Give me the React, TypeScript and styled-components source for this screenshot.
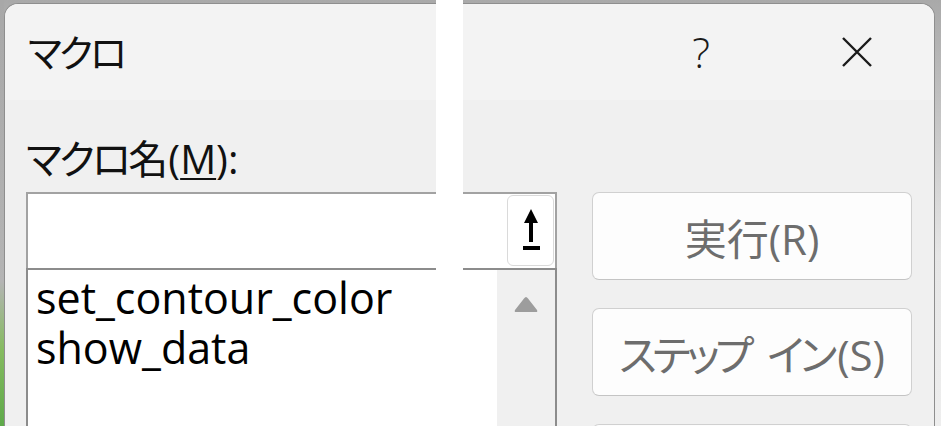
import React from "react";
import styled, { createGlobalStyle } from "styled-components";

const Global = createGlobalStyle`
  html, body { margin: 0; padding: 0; }
  body { background: #b0b0b0; overflow: hidden; }
`;

const JP = `"Open Sans", "Noto Sans CJK JP", sans-serif`;

const Frame = styled.div`
  position: relative;
  width: 941px;
  height: 426px;
  overflow: hidden;
  box-sizing: border-box;
  padding: 3px 6px 0 4px;
  background:
    linear-gradient(180deg, #a8a8a8 0%, #b4b4b4 66%, #86bb60 82%, #5ea94a 100%) left top / 4px 100% no-repeat,
    linear-gradient(180deg, #a9a9a9 0%, #bdbdbd 20%, #e6e6e6 60%, #eeeeee 100%);
  display: flex;
`;

const Seam = styled.div`
  position: absolute;
  top: 0;
  bottom: 0;
  left: 436px;
  width: 27px;
  background: #ffffff;
`;

const Dialog = styled.div`
  flex: 1;
  height: 460px;
  border: 1px solid #8e8e8e;
  border-bottom: none;
  border-radius: 14px 14px 0 0;
  background: #f0f0f0;
  overflow: hidden;
  display: flex;
  flex-direction: column;
`;

const TitleBar = styled.div`
  height: 96px;
  flex: none;
  background: #f3f3f3;
  display: flex;
  align-items: center;
  padding-left: 23px;
  font-family: ${JP};
  font-feature-settings: "palt";
`;

const Kana = styled.span<{ $tight: number }>`
  letter-spacing: ${(p) => p.$tight}em;
`;

const Title = styled.div`
  font-size: 38px;
  color: #111;
  line-height: 1;
`;

const HelpButton = styled.div`
  margin-left: auto;
  width: 60px;
  text-align: center;
  font-family: "Open Sans", sans-serif;
  font-size: 42px;
  font-weight: 300;
  color: #1a1a1a;
  line-height: 1;
`;

const CloseButton = styled.div`
  margin-left: 96px;
  margin-right: 47px;
  width: 60px;
  display: flex;
  justify-content: center;
  align-items: center;
`;

const Body = styled.div`
  display: grid;
  grid-template-columns: 531px 320px;
  column-gap: 35px;
  padding: 0 22px 0 21px;
`;

const LeftColumn = styled.div`
  display: flex;
  flex-direction: column;
`;

const Label = styled.div`
  margin-top: 36px;
  height: 46px;
  line-height: 46px;
  font-family: ${JP};
  font-feature-settings: "palt";
  font-size: 40px;
  color: #111;
  margin-bottom: 10px;
  white-space: nowrap;
  u { text-decoration-thickness: 2px; text-underline-offset: 4px; }
`;

const InputRow = styled.div`
  height: 76px;
  box-sizing: border-box;
  border: 2px solid #a2a2a2;
  border-bottom: none;
  background: #fff;
  display: flex;
  justify-content: flex-end;
  padding: 1px 1px 0 0;
`;

const RefButton = styled.div`
  width: 47px;
  height: 71px;
  box-sizing: border-box;
  border: 1px solid #dadada;
  border-radius: 6px;
  background: #fff;
  display: flex;
  align-items: center;
  justify-content: center;
`;

const ListBox = styled.div`
  height: 200px;
  box-sizing: border-box;
  border: 2px solid #8c8c8c;
  background: #fff;
  display: flex;
`;

const Items = styled.div`
  flex: 1;
  padding: 3px 0 0 8px;
`;

const Item = styled.div`
  font-family: "Open Sans", sans-serif;
  font-size: 43px;
  line-height: 50px;
  height: 50px;
  color: #000;
  white-space: nowrap;
`;

const ScrollBar = styled.div`
  width: 58px;
  background: #f0f0f0;
  display: flex;
  justify-content: center;
  padding-top: 26px;
  box-sizing: border-box;
`;

const RightColumn = styled.div`
  padding-top: 92px;
  display: flex;
  flex-direction: column;
  gap: 28px;
`;

const ActionButton = styled.div`
  height: 88px;
  flex: none;
  box-sizing: border-box;
  border: 1px solid #d0d0d0;
  border-bottom-color: #c4c4c4;
  border-radius: 7px;
  background: #fdfdfd;
  display: flex;
  align-items: center;
  justify-content: center;
  font-family: ${JP};
  font-feature-settings: "palt";
  font-size: 42px;
  color: #6d6d6d;
`;

const Caption = styled.span`
  white-space: pre;
  word-spacing: 0.15em;
`;

const UpArrowIcon = () => (
  <svg width="20" height="44" viewBox="0 0 20 44">
    <polygon points="10,0 17,14 12,14 12,33 8,33 8,14 3,14" fill="#000" />
    <rect x="2" y="37" width="17" height="4" fill="#000" />
  </svg>
);

const CloseIcon = () => (
  <svg width="32" height="32" viewBox="0 0 32 32">
    <path d="M2 2 L30 30 M30 2 L2 30" stroke="#1a1a1a" strokeWidth="2.4" fill="none" />
  </svg>
);

const ScrollUpIcon = () => (
  <svg width="24" height="17" viewBox="0 0 24 17">
    <path d="M12 1 Q13 1 14 2.5 L23 14 Q24 16 22 16 L2 16 Q0 16 1 14 L10 2.5 Q11 1 12 1 Z" fill="#9d9d9d" />
  </svg>
);

const macros = ["set_contour_color", "show_data"];

export default function App() {
  return (
    <>
      <Global />
      <Frame>
        <Dialog>
          <TitleBar>
            <Title>
              <Kana $tight={-0.08}>マクロ</Kana>
            </Title>
            <HelpButton>?</HelpButton>
            <CloseButton>
              <CloseIcon />
            </CloseButton>
          </TitleBar>
          <Body>
            <LeftColumn>
              <Label>
                <Kana $tight={-0.07}>マクロ</Kana>名(<u>M</u>):
              </Label>
              <InputRow>
                <RefButton>
                  <UpArrowIcon />
                </RefButton>
              </InputRow>
              <ListBox>
                <Items>
                  {macros.map((m) => (
                    <Item key={m}>{m}</Item>
                  ))}
                </Items>
                <ScrollBar>
                  <ScrollUpIcon />
                </ScrollBar>
              </ListBox>
            </LeftColumn>
            <RightColumn>
              <ActionButton>
                <Caption>実行(R)</Caption>
              </ActionButton>
              <ActionButton>
                <Caption>
                  <Kana $tight={-0.1}>ステップ</Kana> <Kana $tight={-0.1}>イ</Kana>ン(S)
                </Caption>
              </ActionButton>
              <ActionButton />
            </RightColumn>
          </Body>
        </Dialog>
        <Seam />
      </Frame>
    </>
  );
}
